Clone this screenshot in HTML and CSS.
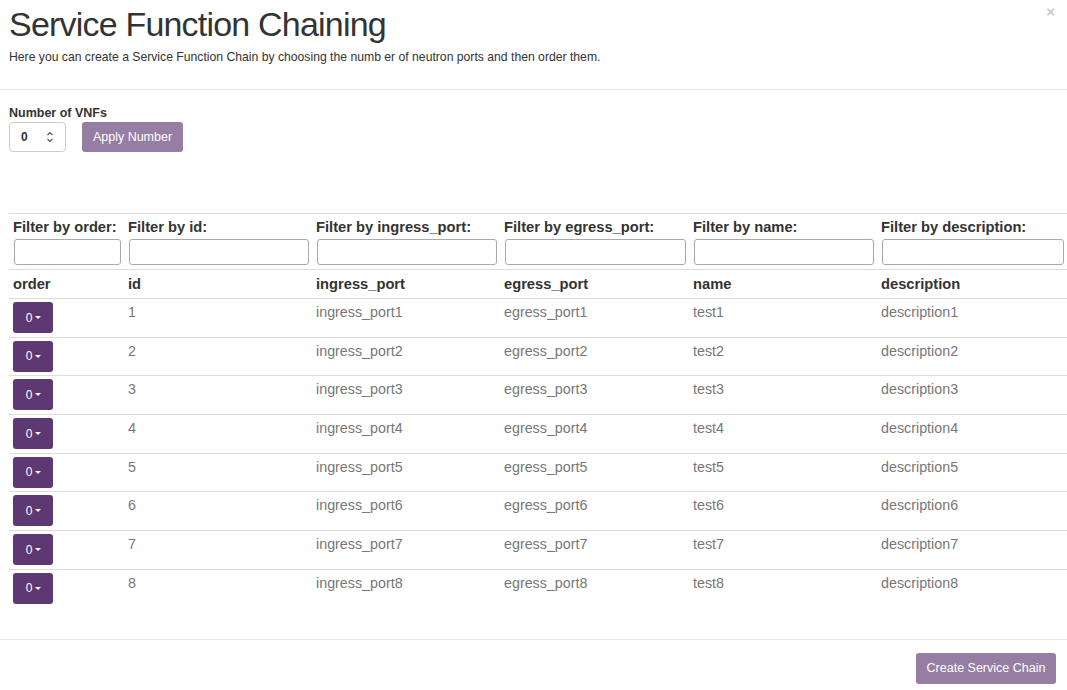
FILE: index.html
```html
<!DOCTYPE html>
<html>
<head>
<meta charset="utf-8">
<link rel="stylesheet" href="styles.css">
</head>
<body>
<div class="modal">
  <div class="modal-header">
    <span class="close">×</span>
    <h1 class="title">Service Function Chaining</h1>
    <p class="subtitle">Here you can create a Service Function Chain by choosing the numb er of neutron ports and then order them.</p>
  </div>
  <div class="modal-body">
    <div class="vnf-form">
      <label class="vnf-label">Number of VNFs</label>
      <div class="vnf-row">
        <div class="num-input">
          <span class="num-value">0</span>
          <svg class="spin" width="8" height="14" viewBox="0 0 8 14"><path d="M1.5 5 L4 2.5 L6.5 5" fill="none" stroke="#555" stroke-width="1.2"/><path d="M1.5 9 L4 11.5 L6.5 9" fill="none" stroke="#555" stroke-width="1.2"/></svg>
        </div>
        <button class="btn btn-light apply">Apply Number</button>
      </div>
    </div>
    <table class="sfc-table">
      <colgroup>
        <col style="width:115px"><col style="width:188px"><col style="width:188px"><col style="width:189px"><col style="width:188px"><col style="width:190px">
      </colgroup>
      <thead>
        <tr class="filter-row">
          <th><div class="flabel">Filter by order:</div><input class="finput" type="text"></th>
          <th><div class="flabel">Filter by id:</div><input class="finput" type="text"></th>
          <th><div class="flabel">Filter by ingress_port:</div><input class="finput" type="text"></th>
          <th><div class="flabel">Filter by egress_port:</div><input class="finput" type="text"></th>
          <th><div class="flabel">Filter by name:</div><input class="finput" type="text"></th>
          <th><div class="flabel">Filter by description:</div><input class="finput" type="text"></th>
        </tr>
        <tr class="head-row">
          <th>order</th><th>id</th><th>ingress_port</th><th>egress_port</th><th>name</th><th>description</th>
        </tr>
      </thead>
      <tbody id="rows">
        <tr><td><button class="dd">0<span class="caret"></span></button></td><td>1</td><td>ingress_port1</td><td>egress_port1</td><td>test1</td><td>description1</td></tr>
        <tr><td><button class="dd">0<span class="caret"></span></button></td><td>2</td><td>ingress_port2</td><td>egress_port2</td><td>test2</td><td>description2</td></tr>
        <tr><td><button class="dd">0<span class="caret"></span></button></td><td>3</td><td>ingress_port3</td><td>egress_port3</td><td>test3</td><td>description3</td></tr>
        <tr><td><button class="dd">0<span class="caret"></span></button></td><td>4</td><td>ingress_port4</td><td>egress_port4</td><td>test4</td><td>description4</td></tr>
        <tr><td><button class="dd">0<span class="caret"></span></button></td><td>5</td><td>ingress_port5</td><td>egress_port5</td><td>test5</td><td>description5</td></tr>
        <tr><td><button class="dd">0<span class="caret"></span></button></td><td>6</td><td>ingress_port6</td><td>egress_port6</td><td>test6</td><td>description6</td></tr>
        <tr><td><button class="dd">0<span class="caret"></span></button></td><td>7</td><td>ingress_port7</td><td>egress_port7</td><td>test7</td><td>description7</td></tr>
        <tr><td><button class="dd">0<span class="caret"></span></button></td><td>8</td><td>ingress_port8</td><td>egress_port8</td><td>test8</td><td>description8</td></tr>
      </tbody>
    </table>
  </div>
  <div class="modal-footer">
    <button class="btn btn-light create">Create Service Chain</button>
  </div>
</div>
</body>
</html>
```
FILE: styles.css
```css
html, body {
  margin: 0;
  padding: 0;
  background: #fff;
}
body {
  font-family: "Liberation Sans", Arial, sans-serif;
  font-size: 14px;
  line-height: 20px;
  color: #333;
}
.modal {
  position: relative;
  width: 1067px;
  overflow: hidden;
}
.modal-header {
  padding: 4px 9px 0 9px;
  height: 85px;
  border-bottom: 1px solid #e5e5e5;
}
.close {
  position: absolute;
  top: 2px;
  right: 12px;
  font-size: 15px;
  font-weight: bold;
  color: #c9c9c9;
  line-height: 20px;
}
.title {
  margin: 0;
  font-size: 34px;
  letter-spacing: -0.8px;
  line-height: 40px;
  font-weight: 500;
  color: #333;
}
.subtitle {
  margin: 5px 0 0 0;
  font-size: 12.2px;
  line-height: 17px;
  color: #333;
}
.modal-body {
  padding: 15px 0 31px 9px;
}
.vnf-label {
  display: block;
  font-size: 12.5px;
  font-weight: bold;
  line-height: 17px;
}
.vnf-row {
  display: flex;
  align-items: center;
  gap: 16px;
}
.num-input {
  width: 57px;
  height: 30px;
  box-sizing: border-box;
  border: 1px solid #ccc;
  border-radius: 4px;
  display: flex;
  align-items: center;
  padding-left: 11px;
  font-size: 12px;
  font-weight: bold;
}
.num-value {
  width: 25px;
}
.btn {
  font-family: "Liberation Sans", Arial, sans-serif;
  border: 0;
  border-radius: 3px;
  color: #fff;
  font-size: 12.5px;
  height: 30px;
}
.btn-light {
  background: #967da4;
}
.apply {
  width: 101px;
}
.sfc-table {
  margin-top: 61px;
  border-collapse: collapse;
  table-layout: fixed;
  width: 1058px;
}
.sfc-table th, .sfc-table td {
  padding: 4px 4px 4px 4px;
  text-align: left;
  vertical-align: top;
}
.sfc-table th {
  font-size: 14.7px;
}
.filter-row th {
  border-top: 1px solid #ddd;
  padding-top: 3px;
  padding-bottom: 4px;
}
.flabel {
  font-weight: bold;
  line-height: 20px;
}
.finput {
  display: block;
  box-sizing: border-box;
  width: 100%;
  height: 26px;
  margin: 2px 0 0 1px;
  border: 1px solid #aaa;
  border-radius: 3px;
}
.head-row th {
  border-top: 1px solid #ddd;
  border-bottom: 1px solid #ddd;
  font-weight: bold;
  padding-bottom: 4px;
}
tbody td {
  border-top: 1px solid #ddd;
  color: #777;
  font-size: 14.3px;
  padding-top: 3px !important;
  padding-bottom: 2.7px !important;
}
tbody tr:first-child td {
  border-top: 0;
}
.dd {
  display: flex;
  align-items: center;
  justify-content: center;
  width: 40px;
  height: 31px;
  margin-top: 0;
  margin-bottom: 1px;
  border: 0;
  border-radius: 3px;
  background: #5e3873;
  color: #fff;
  font-family: "Liberation Sans", Arial, sans-serif;
  font-size: 12px;
  padding: 0 0 0 1px;
}
.caret {
  display: inline-block;
  width: 0;
  height: 0;
  margin-left: 3px;
  border-left: 3px solid transparent;
  border-right: 3px solid transparent;
  border-top: 3px solid #fff;
}
.modal-footer {
  border-top: 1px solid #e5e5e5;
  padding: 13px 11px 6px 0;
  display: flex;
  justify-content: flex-end;
}
.create {
  width: 140px;
  height: 31px;
}
```
